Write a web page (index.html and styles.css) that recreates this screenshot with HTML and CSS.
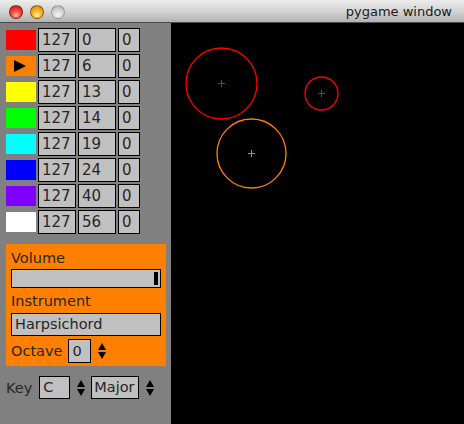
FILE: index.html
```html
<!DOCTYPE html>
<html>
<head>
<meta charset="utf-8">
<link rel="stylesheet" href="styles.css">
</head>
<body>
<div class="window">
  <div class="titlebar">
    <div class="lights">
      <span class="light red"></span>
      <span class="light amber"></span>
      <span class="light grey"></span>
    </div>
    <div class="title">pygame window</div>
  </div>
  <div class="main">
    <div class="panel">
      <div class="rows">
        <div class="row"><span class="swatch" style="background:#ff0000"></span><span class="box w38">127</span><span class="box w38">0</span><span class="box w22">0</span></div>
        <div class="row"><span class="swatch" style="background:#ff8000"><svg class="play" width="12" height="12" viewBox="0 0 12 12"><polygon points="0,0 12,6 0,12" fill="#000"/></svg></span><span class="box w38">127</span><span class="box w38">6</span><span class="box w22">0</span></div>
        <div class="row"><span class="swatch" style="background:#ffff00"></span><span class="box w38">127</span><span class="box w38">13</span><span class="box w22">0</span></div>
        <div class="row"><span class="swatch" style="background:#00ff00"></span><span class="box w38">127</span><span class="box w38">14</span><span class="box w22">0</span></div>
        <div class="row"><span class="swatch" style="background:#00ffff"></span><span class="box w38">127</span><span class="box w38">19</span><span class="box w22">0</span></div>
        <div class="row"><span class="swatch" style="background:#0000ff"></span><span class="box w38">127</span><span class="box w38">24</span><span class="box w22">0</span></div>
        <div class="row"><span class="swatch" style="background:#8000ff"></span><span class="box w38">127</span><span class="box w38">40</span><span class="box w22">0</span></div>
        <div class="row"><span class="swatch" style="background:#ffffff"></span><span class="box w38">127</span><span class="box w38">56</span><span class="box w22">0</span></div>
      </div>
      <div class="settings">
        <div class="label">Volume</div>
        <div class="slider"><span class="handle"></span></div>
        <div class="label">Instrument</div>
        <div class="field">Harpsichord</div>
        <div class="octave">
          <span class="label">Octave</span>
          <span class="box small">0</span>
          <svg class="spin" width="8" height="16" viewBox="0 0 8 16"><polygon points="4,0 8,7 0,7" fill="#000"/><polygon points="0,9 8,9 4,16" fill="#000"/></svg>
        </div>
      </div>
      <div class="keyrow">
        <span class="label">Key</span>
        <span class="box key">C</span>
        <svg class="spin" width="8" height="16" viewBox="0 0 8 16"><polygon points="4,0 8,7 0,7" fill="#000"/><polygon points="0,9 8,9 4,16" fill="#000"/></svg>
        <span class="box mode">Major</span>
        <svg class="spin" width="8" height="16" viewBox="0 0 8 16"><polygon points="4,0 8,7 0,7" fill="#000"/><polygon points="0,9 8,9 4,16" fill="#000"/></svg>
      </div>
    </div>
    <div class="canvas">
      <svg class="drawing" width="293" height="401" viewBox="0 0 293 401">
        <g fill="none" stroke-width="1.3">
          <circle cx="50.5" cy="60.5" r="35.5" stroke="#ff0000"/>
          <circle cx="150.5" cy="70.5" r="16.5" stroke="#ff0000"/>
          <circle cx="80.5" cy="130.5" r="34.5" stroke="#ff8000"/>
        </g>
        <g stroke-width="1" shape-rendering="crispEdges">
          <path d="M47 60.5H54M50.5 57V64" stroke="#ff0000"/>
          <path d="M147 70.5H154M150.5 67V74" stroke="#ff0000"/>
          <path d="M77 130.5H84M80.5 127V134" stroke="#ff8000"/>
        </g>
      </svg>
    </div>
  </div>
</div>
</body>
</html>
```

FILE: styles.css
```css
html, body {
  margin: 0;
  padding: 0;
  background: #000;
}
body {
  width: 464px;
  height: 424px;
  overflow: hidden;
  font-family: "DejaVu Sans", sans-serif;
}
.window {
  width: 464px;
  height: 424px;
  display: flex;
  flex-direction: column;
}
.titlebar {
  height: 22px;
  border-bottom: 1px solid #4a4a4a;
  background: linear-gradient(#ececec, #d4d4d4 50%, #b3b3b3);
  display: flex;
  align-items: center;
  justify-content: space-between;
  padding: 0 12px 0 9px;
}
.lights {
  display: flex;
  gap: 7px;
  padding-top: 1px;
}
.light {
  width: 14px;
  height: 14px;
  border-radius: 50%;
  box-sizing: border-box;
  border: 1px solid rgba(0,0,0,0.4);
}
.light.red {
  background: radial-gradient(circle at 50% 75%, #ffb4a8 0%, #f0453a 45%, #c01810 100%);
}
.light.amber {
  background: radial-gradient(circle at 50% 75%, #fff2a0 0%, #f6b22a 45%, #c87c08 100%);
}
.light.grey {
  background: radial-gradient(circle at 50% 75%, #f6f6f6 0%, #d4d4d4 50%, #a8a8a8 100%);
  border-color: rgba(0,0,0,0.22);
}
.title {
  font-family: "DejaVu Sans", sans-serif;
  font-size: 13px;
  color: #1a1a1a;
  padding-top: 1px;
}
.main {
  flex: 1;
  display: flex;
}
.panel {
  width: 171px;
  background: #808080;
  padding: 5px 0 0 6px;
  box-sizing: border-box;
  display: flex;
  flex-direction: column;
}
.rows {
  display: flex;
  flex-direction: column;
  gap: 2px;
}
.row {
  display: flex;
  align-items: center;
  gap: 2px;
  height: 24px;
}
.swatch {
  width: 30px;
  height: 20px;
  display: flex;
  align-items: center;
  justify-content: center;
}
.play {
  display: block;
  margin-left: -3px;
}
.box {
  box-sizing: border-box;
  height: 24px;
  background: #c0c0c0;
  border: 1px solid #000;
  color: #262626;
  font-size: 15px;
  line-height: 22px;
  padding-left: 3px;
  white-space: nowrap;
  overflow: hidden;
}
.w38 { width: 38px; }
.w22 { width: 22px; }
.row .box:first-of-type { padding-left: 4px; }
.settings {
  margin-top: 10px;
  width: 160px;
  height: 122px;
  box-sizing: border-box;
  background: #ff8000;
  padding: 4px 5px 0 5px;
  display: flex;
  flex-direction: column;
}
.label {
  font-size: 14.5px;
  color: #262626;
  line-height: 20px;
}
.slider {
  margin-top: 1px;
  height: 19px;
  box-sizing: border-box;
  background: #c0c0c0;
  border: 1px solid #000;
  position: relative;
}
.handle {
  position: absolute;
  right: 2px;
  top: 2px;
  width: 4px;
  height: 13px;
  background: #000;
}
.settings .label + .field { margin-top: 2px; }
.slider + .label { margin-top: 3px; }
.field {
  height: 23px;
  box-sizing: border-box;
  background: #c0c0c0;
  border: 1px solid #000;
  font-size: 14.5px;
  color: #262626;
  line-height: 21px;
  padding-left: 3px;
}
.octave {
  margin-top: 3px;
  display: flex;
  align-items: center;
  height: 24px;
}
.octave .label { margin-right: 6px; }
.box.small {
  width: 23px;
  height: 24px;
  font-size: 14.5px;
}
.octave .spin { margin-left: 7px; }
.spin { display: block; }
.keyrow {
  margin-top: 10px;
  display: flex;
  align-items: center;
  height: 23px;
}
.keyrow .label { margin-right: 7px; }
.box.key {
  width: 31px;
  height: 23px;
  font-size: 14.5px;
  line-height: 21px;
}
.box.mode {
  width: 48px;
  height: 23px;
  font-size: 14.5px;
  line-height: 21px;
  padding-left: 2px;
}
.keyrow .spin { margin: 0 6px 0 7px; }
.canvas {
  flex: 1;
  background: #000;
  position: relative;
}
.drawing {
  position: absolute;
  left: 0;
  top: 0;
}
```
